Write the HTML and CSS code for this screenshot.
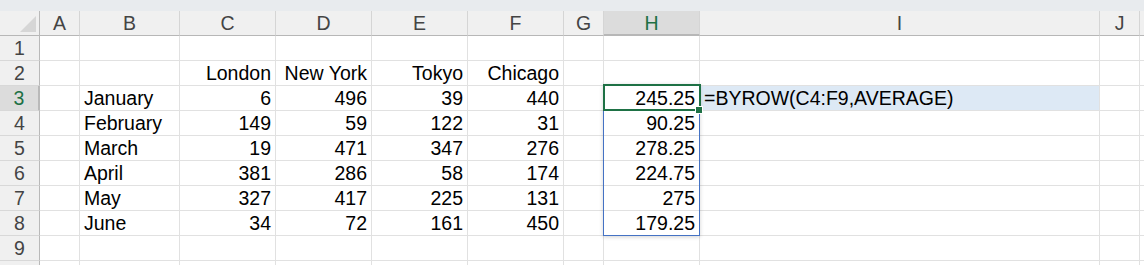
FILE: index.html
```html
<!DOCTYPE html>
<html lang="en">

<head>
    <meta charset="UTF-8">
    <title>BYROW</title>
    <link rel="stylesheet" href="styles.css">
</head>

<body>
    <div class="toolbar-strip"></div>

    <div class="sheet">
        <!-- column headers -->
        <div class="hd corner"><span class="tri"></span></div>
        <div class="hd col">A</div>
        <div class="hd col">B</div>
        <div class="hd col">C</div>
        <div class="hd col">D</div>
        <div class="hd col">E</div>
        <div class="hd col">F</div>
        <div class="hd col">G</div>
        <div class="hd col active-col">H</div>
        <div class="hd col">I</div>
        <div class="hd col">J</div>
        <div class="hd col"></div>

        <!-- row 1 -->
        <div class="hd row">1</div>
        <div class="c"></div><div class="c"></div><div class="c"></div><div class="c"></div><div class="c"></div>
        <div class="c"></div><div class="c"></div><div class="c"></div><div class="c"></div><div class="c"></div><div class="c"></div>

        <!-- row 2 -->
        <div class="hd row">2</div>
        <div class="c"></div>
        <div class="c"></div>
        <div class="c num">London</div>
        <div class="c num">New York</div>
        <div class="c num">Tokyo</div>
        <div class="c num">Chicago</div>
        <div class="c"></div><div class="c"></div><div class="c"></div><div class="c"></div><div class="c"></div>

        <!-- row 3 -->
        <div class="hd row active-row">3</div>
        <div class="c"></div>
        <div class="c">January</div>
        <div class="c num">6</div>
        <div class="c num">496</div>
        <div class="c num">39</div>
        <div class="c num">440</div>
        <div class="c"></div>
        <div class="c num">245.25</div>
        <div class="c formula">=BYROW(C4:F9,AVERAGE)</div>
        <div class="c"></div><div class="c"></div>

        <!-- row 4 -->
        <div class="hd row">4</div>
        <div class="c"></div>
        <div class="c">February</div>
        <div class="c num">149</div>
        <div class="c num">59</div>
        <div class="c num">122</div>
        <div class="c num">31</div>
        <div class="c"></div>
        <div class="c num">90.25</div>
        <div class="c"></div><div class="c"></div><div class="c"></div>

        <!-- row 5 -->
        <div class="hd row">5</div>
        <div class="c"></div>
        <div class="c">March</div>
        <div class="c num">19</div>
        <div class="c num">471</div>
        <div class="c num">347</div>
        <div class="c num">276</div>
        <div class="c"></div>
        <div class="c num">278.25</div>
        <div class="c"></div><div class="c"></div><div class="c"></div>

        <!-- row 6 -->
        <div class="hd row">6</div>
        <div class="c"></div>
        <div class="c">April</div>
        <div class="c num">381</div>
        <div class="c num">286</div>
        <div class="c num">58</div>
        <div class="c num">174</div>
        <div class="c"></div>
        <div class="c num">224.75</div>
        <div class="c"></div><div class="c"></div><div class="c"></div>

        <!-- row 7 -->
        <div class="hd row">7</div>
        <div class="c"></div>
        <div class="c">May</div>
        <div class="c num">327</div>
        <div class="c num">417</div>
        <div class="c num">225</div>
        <div class="c num">131</div>
        <div class="c"></div>
        <div class="c num">275</div>
        <div class="c"></div><div class="c"></div><div class="c"></div>

        <!-- row 8 -->
        <div class="hd row">8</div>
        <div class="c"></div>
        <div class="c">June</div>
        <div class="c num">34</div>
        <div class="c num">72</div>
        <div class="c num">161</div>
        <div class="c num">450</div>
        <div class="c"></div>
        <div class="c num">179.25</div>
        <div class="c"></div><div class="c"></div><div class="c"></div>

        <!-- row 9 -->
        <div class="hd row">9</div>
        <div class="c"></div><div class="c"></div><div class="c"></div><div class="c"></div><div class="c"></div>
        <div class="c"></div><div class="c"></div><div class="c"></div><div class="c"></div><div class="c"></div><div class="c"></div>

        <!-- row 10 (cut off, only the top of it shows) -->
        <div class="hd row"></div>
        <div class="c"></div><div class="c"></div><div class="c"></div><div class="c"></div><div class="c"></div>
        <div class="c"></div><div class="c"></div><div class="c"></div><div class="c"></div><div class="c"></div><div class="c"></div>

        <!-- spill range + active cell -->
        <div class="spill"></div>
        <div class="active-cell"></div>
        <div class="fill-handle"></div>
    </div>
</body>

</html>
```

FILE: styles.css
```css
/* Estilo general */
body {
    margin: 0;
    padding: 0;
    background-color: #fff;
    font-family: "Liberation Sans", Arial, sans-serif;
    font-size: 19.5px;
    color: #000;
    overflow: hidden;
}

.toolbar-strip {
    height: 11px;
    background-color: #e8ebee;
}

/* Hoja */
.sheet {
    position: relative;
    display: grid;
    grid-template-columns: 40px 40px 100px 96px 96px 96px 96px 40px 96px 400px 40px 1fr;
    grid-auto-rows: 25px;
}

.c,
.hd {
    box-sizing: border-box;
    border-right: 1px solid #e1e1e1;
    border-bottom: 1px solid #e1e1e1;
    line-height: 24px;
    white-space: nowrap;
    overflow: visible;
}

.c {
    padding: 0 4px;
}

.c.num {
    text-align: right;
    padding: 0 4px 0 0;
}

.formula {
    background-color: #dde9f5;
    padding-left: 4px;
}

/* Cabeceras */
.hd {
    background-color: #f0f0f0;
    color: #444;
    text-align: center;
}

.hd.col {
    border-right-color: #d5d5d5;
    border-bottom-color: #b7b7b7;
}

.hd.row {
    border-right-color: #b9b9b9;
    border-bottom-color: #d8d8d8;
}

.hd.corner {
    position: relative;
    border-right-color: #b9b9b9;
    border-bottom-color: #b7b7b7;
}

.tri {
    position: absolute;
    right: 3px;
    bottom: 3px;
    width: 16px;
    height: 16px;
    background-color: #d6d6d6;
    clip-path: polygon(100% 0, 100% 100%, 0 100%);
}

.active-col {
    background-color: #dcdcdc;
    color: #1e7145;
    border-bottom: 2px solid #1e7145;
}

.active-row {
    background-color: #dcdcdc;
    color: #1e7145;
    border-right: 2px solid #1e7145;
}

/* Rango derramado y celda activa */
.spill {
    position: absolute;
    left: 603px;
    top: 73px;
    width: 97px;
    height: 152px;
    box-sizing: border-box;
    border: 1px solid #4472c4;
    box-shadow: 0 1px 4px rgba(0, 0, 0, 0.18);
}

.active-cell {
    position: absolute;
    left: 603px;
    top: 73px;
    width: 98px;
    height: 27px;
    box-sizing: border-box;
    border: 2px solid #1e7145;
}

.fill-handle {
    position: absolute;
    left: 695px;
    top: 95px;
    width: 6px;
    height: 6px;
    background-color: #1e7145;
    border: 1px solid #fff;
}
```
